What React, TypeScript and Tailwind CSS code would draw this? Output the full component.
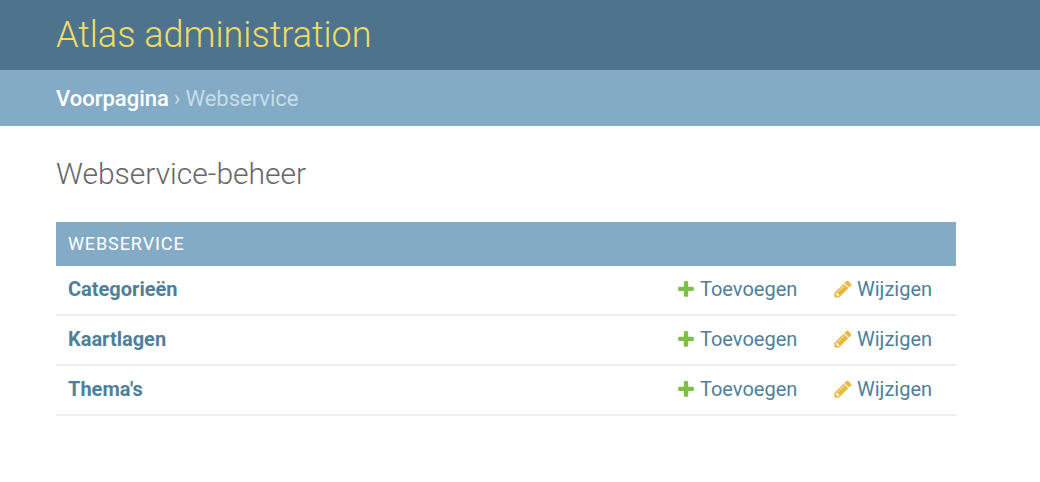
const rows = ["Categorieën", "Kaartlagen", "Thema's"];

function PlusIcon() {
  return (
    <svg viewBox="0 0 1792 1792" className="size-5 shrink-0" aria-hidden="true">
      <path fill="#80bf47" d="M1600 796v192q0 40-28 68t-68 28h-416v416q0 40-28 68t-68 28h-192q-40 0-68-28t-28-68v-416h-416q-40 0-68-28t-28-68v-192q0-40 28-68t68-28h416v-416q0-40 28-68t68-28h192q40 0 68 28t28 68v416h416q40 0 68 28t28 68z" />
    </svg>
  );
}

function PencilIcon() {
  return (
    <svg viewBox="0 0 1792 1792" className="size-5 shrink-0" aria-hidden="true">
      <path fill="#e9b93e" d="M491 1536l91-91-235-235-91 91v107h128v128h107zm523-928q0-22-22-22-10 0-17 7l-542 542q-7 7-7 17 0 22 22 22 10 0 17-7l542-542q7-7 7-17zm-54-192l416 416-832 832h-416v-416zm683 96q0 53-37 90l-166 166-416-416 166-165q36-38 90-38 53 0 91 38l235 234q37 39 37 91z" />
    </svg>
  );
}

export default function App() {
  return (
    <div className="min-h-screen bg-white font-['Roboto',sans-serif] text-xl text-[#4f7f9b]">
      <header className="flex h-[70px] items-center bg-[#4d748c] px-14">
        <h1 className="text-4xl font-light text-[#f1dc66]">Atlas administration</h1>
      </header>
      <nav aria-label="Breadcrumb" className="flex h-14 items-center gap-[5px] bg-[#83abc5] px-14 pt-0.5 text-[22px] text-[#c8dce8]">
        <a href="#" className="font-medium text-white">Voorpagina</a>
        <span>›</span>
        <span>Webservice</span>
      </nav>
      <main className="px-14 pt-[30px]">
        <h2 className="mb-[30px] text-3xl font-light leading-9 text-[#666]">Webservice-beheer</h2>
        <table className="w-full max-w-[900px] border-separate border-spacing-0">
          <caption className="h-11 bg-[#83abc5] px-3 text-left text-lg leading-[44px] tracking-wider text-white">
            <a href="#">WEBSERVICE</a>
          </caption>
          <tbody>
            {rows.map((name) => (
              <tr key={name} className="h-[50px]">
                <th scope="row" className="border-b-2 border-[#eee] px-3 pb-0.5 text-left font-bold"><a href="#">{name}</a></th>
                <td className="w-[157px] border-b-2 border-[#eee] pb-0.5">
                  <a href="#" className="flex items-center gap-1"><PlusIcon />Toevoegen</a>
                </td>
                <td className="w-[123px] border-b-2 border-[#eee] pb-0.5">
                  <a href="#" className="flex items-center gap-1"><PencilIcon />Wijzigen</a>
                </td>
              </tr>
            ))}
          </tbody>
        </table>
      </main>
    </div>
  );
}
